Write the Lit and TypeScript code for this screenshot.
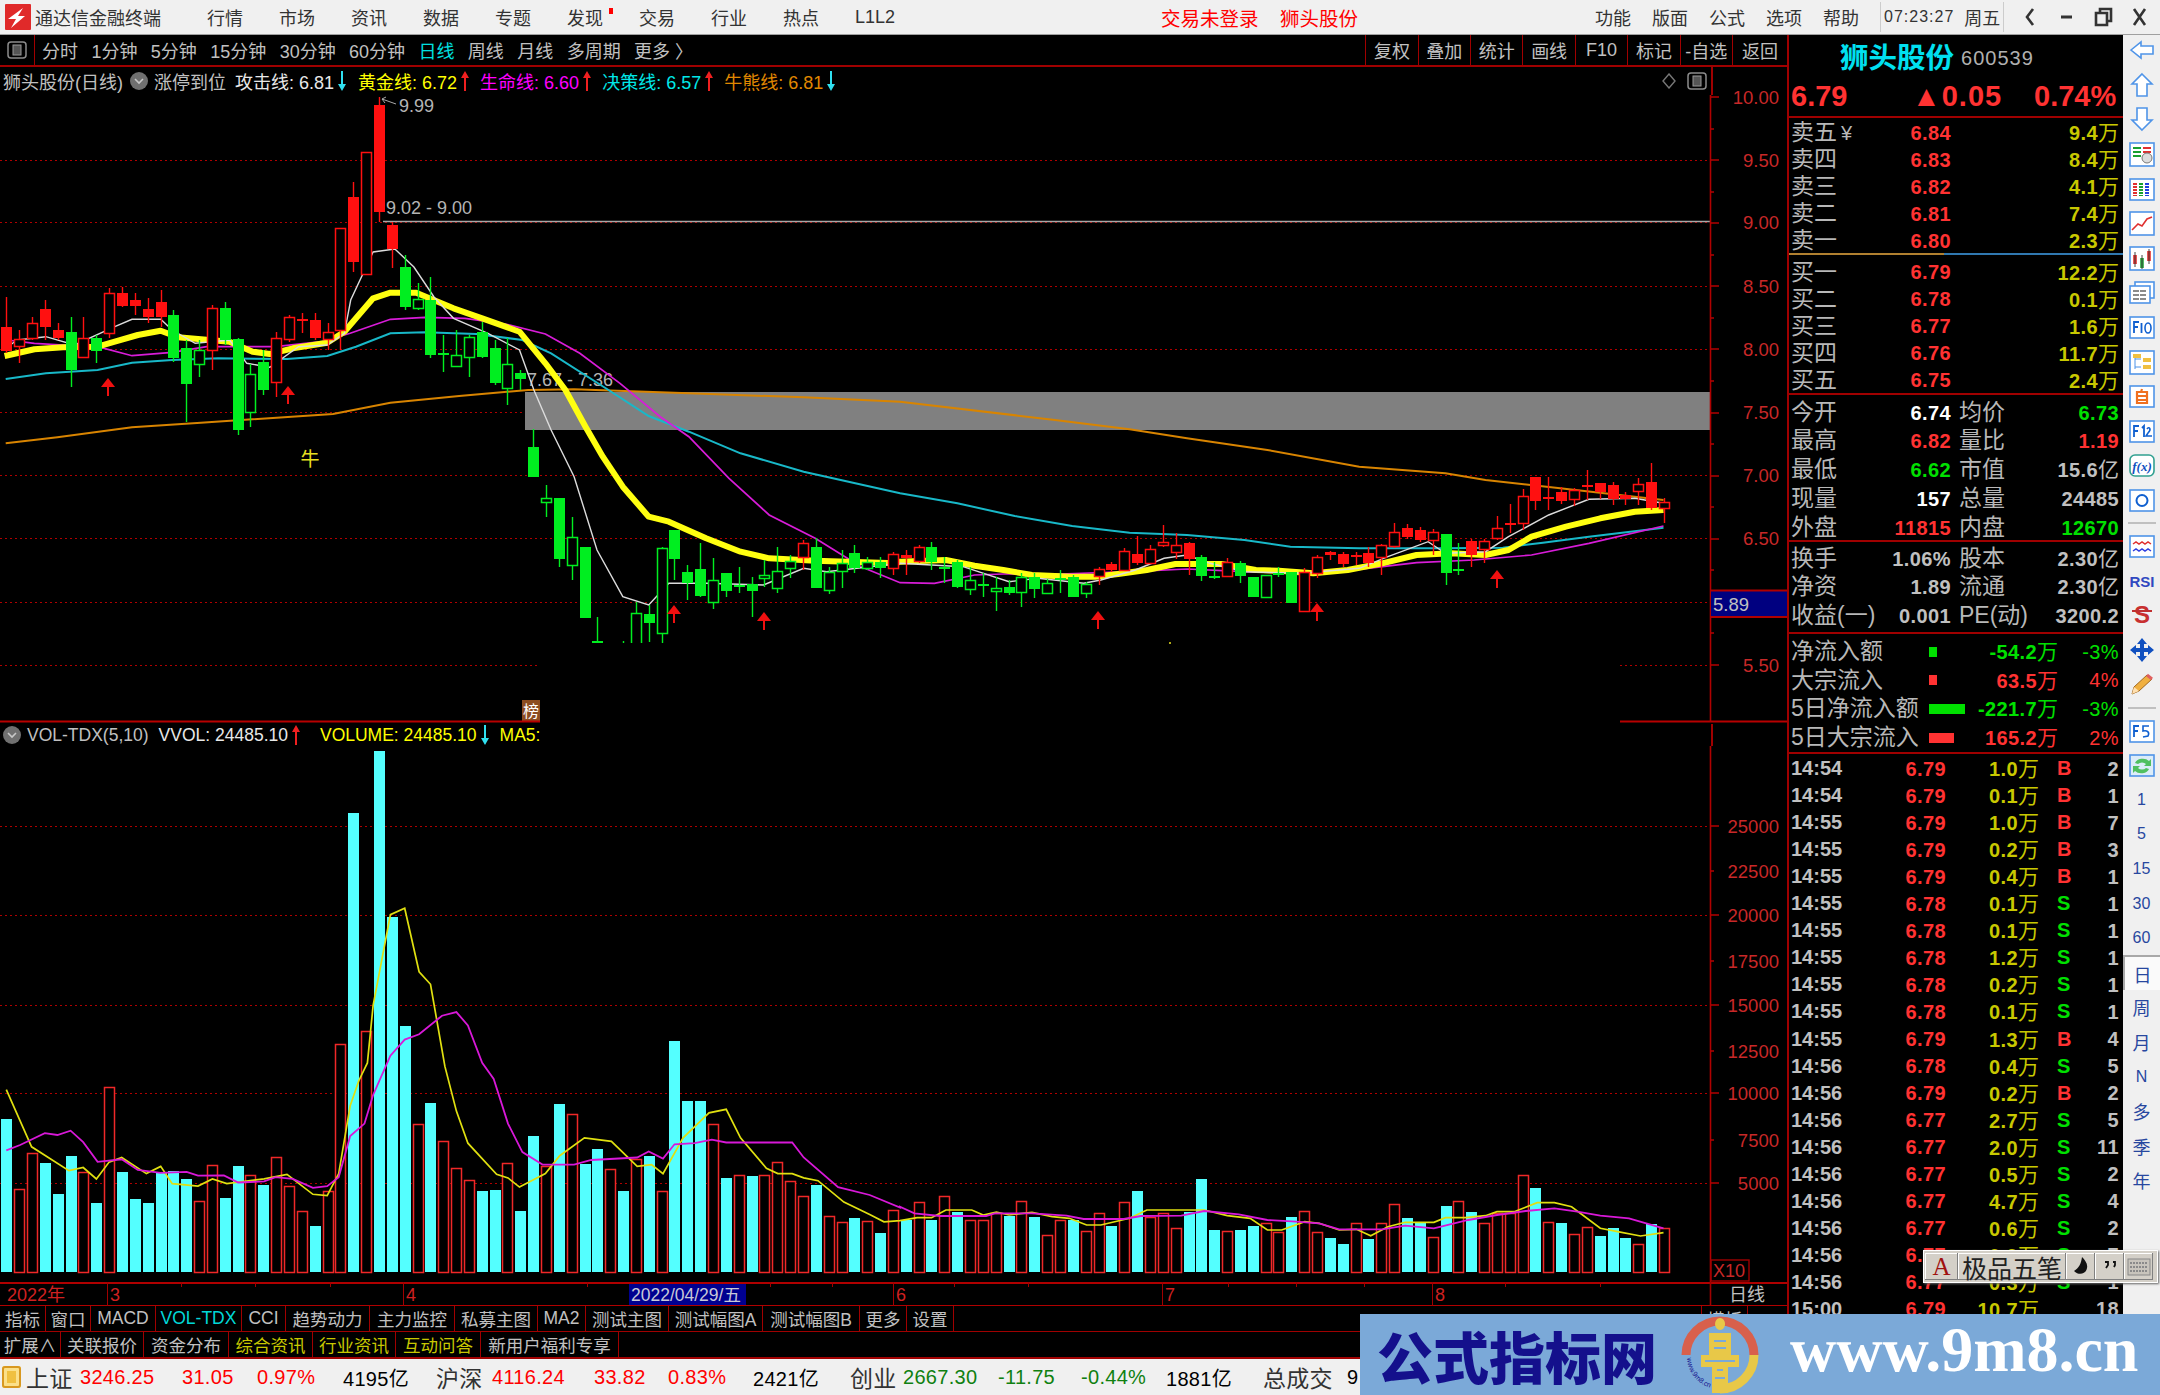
import { LitElement, html, css, svg } from "lit";
import { customElement } from "lit/decorators.js";

type C = [number, number, number, number, string];
const c6: C[] = [
[112,182,22,190,"R"],[148,168,120,218,"r"],[98,145,80,150,"r"],[58,112,30,150,"R"],[120,143,100,150,"R"],
[125,240,80,292,"G"],[145,200,80,205,"r"],[143,182,135,220,"G"],[8,130,-6,145,"r"],[8,48,-9,50,"R"],
[30,48,10,75,"R"],[58,80,25,100,"R"],[35,80,0,110,"R"],[76,205,60,215,"G"],[175,282,150,395,"G"],
[180,222,150,260,"g"],[55,180,45,240,"r"],[53,150,35,165,"G"],[148,420,145,435,"G"],[252,366,222,412,"g"],
[215,300,180,315,"G"],[145,275,125,322,"r"],[82,148,75,155,"r"],[88,92,70,130,"R"],[90,145,70,150,"R"],
[125,148,100,180,"r"],[-186,120,-186,180,"r"],[-279,-84,-324,-54,"R"],[-414,-48,-414,-48,"r"],[-555,-234,-579,-204,"R"],
[-195,-123,-204,-66,"R"],[-69,52,-105,60,"G"],[28,55,-21,60,"g"],[30,195,-39,205,"G"],[190,195,135,245,"G"],
[195,228,120,230,"g"],[140,200,135,260,"g"],[125,200,95,205,"G"],[175,278,150,285,"G"],[222,295,145,345,"g"],
[248,268,240,300,"G"],[472,560,418,562,"G"],[625,637,585,682,"g"],[625,808,625,830,"G"],[740,825,680,870,"g"],
[770,985,770,985,"G"],[1053,1070,980,1070,"G"],[1100,1110,1100,1110,"G"],[1062,1070,1052,1070,"G"],[968,1080,935,1080,"g"],
[972,998,945,1055,"G"],[775,1028,770,1070,"g"],[720,808,720,870,"G"],[847,880,825,930,"G"],[838,918,760,920,"G"],
[870,937,805,958,"g"],[850,903,850,920,"G"],[884,889,830,910,"G"],[882,902,860,980,"G"],[855,865,810,890,"g"],
[842,893,770,908,"g"],[812,835,795,865,"g"],[760,800,750,840,"r"],[770,893,745,895,"G"],[845,900,830,912,"g"],
[820,843,780,895,"g"],[788,835,765,850,"G"],[815,833,800,840,"g"],[815,835,800,865,"G"],[793,833,785,855,"r"],
];
const c7: C[] = [
[405,415,390,465,"R"],[380,422,375,430,"r"],[380,425,365,450,"G"],[440,444,410,490,"G"],[425,500,420,505,"G"],
[480,508,440,525,"g"],[493,498,460,530,"G"],[503,512,470,572,"g"],[500,518,480,525,"G"],[472,516,460,562,"g"],
[472,508,460,535,"G"],[488,520,478,522,"g"],[475,480,450,520,"G"],[470,531,465,532,"G"],[493,520,485,535,"g"],
[448,467,440,495,"r"],[433,450,425,455,"R"],[393,450,385,452,"r"],[402,428,348,435,"R"],[388,428,375,430,"r"],
[365,375,316,380,"r"],[376,395,338,418,"r"],[370,418,365,465,"R"],[410,468,405,482,"G"],[468,473,425,478,"G"],
[425,468,415,472,"r"],[428,468,422,490,"G"],[470,531,470,531,"G"],[465,531,465,531,"g"],[458,463,440,470,"G"],
[455,550,455,550,"G"],[457,572,445,572,"r"],[410,458,405,475,"r"],[397,404,392,420,"R"],[402,432,395,440,"R"],
[405,410,395,435,"R"],[398,430,380,440,"R"],[376,412,372,465,"r"],[335,378,308,385,"r"],[325,352,312,358,"R"],
[330,360,320,365,"R"],[336,360,328,405,"r"],[343,460,343,495,"G"],[447,453,370,465,"G"],[362,405,358,442,"R"],
[362,388,358,428,"r"],[325,355,288,360,"r"],[308,315,252,340,"R"],[227,308,208,330,"r"],[172,243,172,270,"R"],
[231,238,172,270,"R"],[217,243,200,252,"R"],[210,236,205,258,"r"],[195,199,150,240,"R"],[190,217,190,238,"R"],
[195,238,185,255,"R"],[225,237,215,255,"R"],[192,212,175,255,"r"],[185,265,130,270,"R"],[245,263,235,310,"r"],
];
const candles = [
  ...c6.map((c) => ({ t: 290 + c[0] / 3, b: 290 + c[1] / 3, wt: 290 + c[2] / 3, wb: 290 + c[3] / 3, k: c[4] })),
  ...c7.map((c) => ({ t: 420 + c[0] / 3, b: 420 + c[1] / 3, wt: 420 + c[2] / 3, wb: 420 + c[3] / 3, k: c[4] })),
];
const vol8: [string, number][] = [
["c",1118],["r",1312],["r",1212],["c",1240],["c",1328],["c",1220],["r",1265],["c",1353],["r",1027],["c",1265],
["c",1340],["c",1353],["c",1265],["c",1262],["c",1286],["r",1347],["r",1245],["c",1337],["c",1248],["r",1275],
["c",1303],["r",1224],["r",1304],["r",1376],["c",1416],["r",1320],["r",908],["c",260],["r",872],["c",88],
["c",552],["c",858],["r",1132],["c",1072],["r",1178],["r",1254],["r",1288],["c",1320],["c",1316],["r",1241],
["c",1375],["c",1165],["r",1250],["c",1076],["r",1102],["c",1244],["c",1202],["r",1258],["c",1320],["r",1228],
["c",1220],["r",1320],["c",900],["c",1068],["c",1068],["r",1132],["c",1282],["r",1275],["c",1278],["r",1275],
["r",1238],["r",1292],["r",1334],["c",1303],["r",1388],["r",1405],["c",1395],["r",1402],["c",1437],["r",1372],
];
const vol9: [string, number][] = [
["c",510],["r",457],["c",510],["r",438],["c",485],["r",510],["r",510],["r",490],["c",497],["r",452],
["c",500],["r",556],["r",510],["c",510],["r",543],["r",488],["c",527],["r",457],["c",424],["r",500],
["r",488],["r",533],["c",485],["c",388],["c",541],["r",542],["c",541],["c",527],["r",520],["r",547],
["c",500],["r",484],["r",547],["c",564],["c",581],["r",520],["c",568],["r",520],["r",461],["c",505],
["c",518],["r",560],["c",469],["r",452],["c",487],["r",520],["r",490],["r",490],["r",376],["c",415],
["r",515],["c",518],["r",551],["r",530],["c",559],["c",533],["c",564],["r",583],["c",523],["r",533],
];
const vols = [
  ...vol8.map((v) => ({ k: v[0], t: 720 + v[1] / 2.8 })),
  ...vol9.map((v) => ({ k: v[0], t: 1050 + v[1] / 3 })),
];
type P = [number, number];
const pts = (a: P[], ox: number, oy: number, sy: number) =>
  a.map((p) => `${(ox + p[0] / 1.742).toFixed(1)},${(oy + p[1] / sy).toFixed(1)}`).join(" ");
const line6 = (a: P[], b: P[]) => pts(a, 0, 290, 3) + " " + pts(b, 900, 420, 3);
const lineV = (a: P[], b: P[]) => pts(a, 0, 720, 2.8) + " " + pts(b, 900, 1050, 3);

const yellow = line6(
  [[8,198],[60,178],[110,172],[170,170],[200,155],[240,135],[280,122],[310,142],[350,148],[400,155],[440,185],[470,192],[510,175],[570,158],[600,125],[650,25],[680,8],[725,8],[790,55],[840,85],[905,125],[950,220],[985,300],[1020,410],[1050,500],[1085,590],[1130,680],[1165,695],[1230,745],[1290,785],[1340,805],[1420,812],[1560,820]],
  [[0,425],[80,420],[130,437],[180,450],[230,465],[300,470],[340,470],[380,462],[430,450],[480,432],[560,432],[620,450],[660,452],[720,460],[780,450],[840,430],[900,405],[960,400],[1020,405],[1060,390],[1100,350],[1160,320],[1220,295],[1280,275],[1330,270]]);
const magenta = line6(
  [[12,150],[60,160],[110,165],[170,170],[230,197],[300,187],[360,170],[480,170],[560,155],[610,130],[680,88],[740,82],[810,85],[880,102],[950,132],[1010,190],[1080,280],[1150,380],[1200,440],[1270,565],[1340,675],[1420,745],[1500,830],[1568,878]],
  [[60,490],[130,465],[180,462],[280,462],[400,455],[500,447],[600,455],[700,460],[800,448],[900,428],[1000,420],[1100,405],[1200,370],[1330,318]]);
const cyan = line6(
  [[10,267],[80,250],[170,240],[230,218],[300,210],[380,205],[500,207],[570,198],[620,170],[680,130],[740,127],[830,132],[910,150],[960,190],[1060,300],[1130,378],[1200,425],[1290,490],[1400,545],[1568,610]],
  [[100,250],[200,288],[300,318],[400,338],[500,345],[600,360],[680,380],[800,385],[950,385],[1050,383],[1120,368],[1200,350],[1330,323]]);
const orange = line6(
  [[10,460],[100,442],[230,412],[350,398],[580,372],[680,338],[800,318],[920,300],[1000,298],[1200,310],[1400,322],[1568,335]],
  [[270,0],[400,28],[500,55],[640,90],[800,140],[950,160],[1020,180],[1150,205],[1330,240]]);
const white = line6(
  [[10,175],[30,150],[80,140],[130,165],[200,110],[230,88],[280,88],[300,120],[340,160],[400,150],[430,220],[470,232],[520,170],[570,165],[600,130],[611,30],[650,-114],[688,-123],[721,-69],[756,21],[790,85],[850,130],[905,180],[930,300],[960,420],[1000,560],[1040,780],[1085,920],[1130,945],[1165,880],[1230,880],[1330,885],[1400,835],[1440,845],[1568,820]],
  [[110,440],[190,485],[240,475],[320,490],[350,480],[410,450],[460,415],[500,405],[540,430],[600,455],[700,460],[800,445],[850,410],[920,365],[950,400],[1020,395],[1060,350],[1130,285],[1200,238],[1280,235],[1330,250]]);
const vYellow = lineV(
  [[11,1035],[55,1195],[120,1262],[145,1253],[168,1285],[190,1238],[212,1225],[255,1270],[280,1250],[300,1298],[345,1305],[370,1285],[395,1298],[460,1285],[500,1272],[545,1328],[570,1332],[590,1270],[610,1080],[625,1010],[640,960],[650,800],[680,545],[705,527],[730,705],[750,740],[775,970],[795,1095],[815,1185],[865,1272],[885,1282],[905,1308],[950,1270],[975,1220],[1018,1170],[1065,1180],[1110,1250],[1135,1245],[1155,1270],[1190,1170],[1235,1100],[1265,1090],[1290,1170],[1335,1255],[1355,1270],[1380,1270],[1400,1282],[1425,1290],[1470,1350],[1515,1385],[1540,1405],[1568,1402]],
  [[0,512],[30,503],[55,503],[80,480],[125,480],[145,495],[168,486],[190,495],[230,487],[265,500],[295,505],[325,525],[350,525],[400,505],[430,480],[490,480],[530,480],[570,497],[610,505],[640,540],[665,540],[705,515],[730,520],[765,540],[795,538],[820,557],[850,530],[880,517],[930,517],[950,503],[985,503],[1020,497],[1040,485],[1070,485],[1110,458],[1140,458],[1170,470],[1220,535],[1250,545],[1290,558],[1330,548]]);
const vMag = lineV(
  [[11,1205],[35,1190],[78,1157],[100,1162],[123,1150],[145,1182],[170,1237],[212,1230],[240,1260],[280,1268],[325,1265],[345,1276],[390,1275],[415,1295],[460,1292],[480,1280],[510,1285],[545,1310],[570,1305],[590,1280],[610,1165],[635,1130],[650,1050],[680,940],[705,895],[730,880],[770,828],[795,818],[815,855],[840,960],[860,1005],[885,1130],[910,1210],[945,1245],[1000,1245],[1030,1232],[1110,1225],[1130,1208],[1155,1228],[1175,1188],[1210,1185],[1240,1175],[1265,1183],[1380,1183],[1400,1225],[1460,1308],[1515,1330],[1568,1365]],
  [[0,470],[25,490],[70,498],[150,498],[165,490],[230,490],[290,497],[320,507],[390,507],[420,498],[490,497],[530,483],[590,493],[640,510],[690,515],[730,520],[765,538],[840,538],[880,527],[930,535],[990,510],[1040,495],[1090,483],[1140,475],[1180,485],[1220,497],[1270,505],[1330,535]]);

const arrows: P[] = [[108,378],[288,386],[674,605],[764,612],[1098,611],[1317,603],[1497,570]];

const bx = (i: number) => 6.3 + 12.85 * i;

const book = [
  ["卖五", "6.84", "9.4万", "¥"], ["卖四", "6.83", "8.4万"], ["卖三", "6.82", "4.1万"], ["卖二", "6.81", "7.4万"], ["卖一", "6.80", "2.3万"],
];
const book2 = [["买一", "6.79", "12.2万"], ["买二", "6.78", "0.1万"], ["买三", "6.77", "1.6万"], ["买四", "6.76", "11.7万"], ["买五", "6.75", "2.4万"]];
const stats = [
  ["今开", "6.74", "w", "均价", "6.73", "g"], ["最高", "6.82", "r", "量比", "1.19", "r"], ["最低", "6.62", "g", "市值", "15.6亿", "s"],
  ["现量", "157", "w", "总量", "24485", "s"], ["外盘", "11815", "r", "内盘", "12670", "g"],
];
const stats2 = [
  ["换手", "1.06%", "s", "股本", "2.30亿", "s"], ["净资", "1.89", "s", "流通", "2.30亿", "s"], ["收益(一)", "0.001", "s", "PE(动)", "3200.2", "s"],
];
const flows = [
  ["净流入额", 8, "g", "-54.2万", "-3%"], ["大宗流入", 8, "r", "63.5万", "4%"],
  ["5日净流入额", 36, "g", "-221.7万", "-3%"], ["5日大宗流入", 25, "r", "165.2万", "2%"],
];
const ticks = [
  ["14:54","6.79","1.0万","B","2"],["14:54","6.79","0.1万","B","1"],["14:55","6.79","1.0万","B","7"],["14:55","6.79","0.2万","B","3"],
  ["14:55","6.79","0.4万","B","1"],["14:55","6.78","0.1万","S","1"],["14:55","6.78","0.1万","S","1"],["14:55","6.78","1.2万","S","1"],
  ["14:55","6.78","0.2万","S","1"],["14:55","6.78","0.1万","S","1"],["14:55","6.79","1.3万","B","4"],["14:56","6.78","0.4万","S","5"],
  ["14:56","6.79","0.2万","B","2"],["14:56","6.77","2.7万","S","5"],["14:56","6.77","2.0万","S","11"],["14:56","6.77","0.5万","S","2"],
  ["14:56","6.77","4.7万","S","4"],["14:56","6.77","0.6万","S","2"],["14:56","6.77","0.9万","S","7"],["14:56","6.77","0.3万","S","1"],
  ["15:00","6.79","10.7万","","18"],
];
const tabs1: [string, number, string?][] = [
  ["指标",46],["窗口",45],["MACD",65],["VOL-TDX",86,"c"],["CCI",44],["趋势动力",84],["主力监控",85],["私募主图",83],["MA2",48],["测试主图",83],["测试幅图A",94],["测试幅图B",97],["更多",47],["设置",47],
];
const tabs2: [string, number, string?][] = [
  ["扩展∧",61],["关联报价",83],["资金分布",85],["综合资讯",84,"y"],["行业资讯",83,"y"],["互动问答",85,"y"],["新用户福利专享",138],
];
const menus = ["行情","市场","资讯","数据","专题","发现","交易","行业","热点","L1L2"];
const periods = ["分时","1分钟","5分钟","15分钟","30分钟","60分钟","日线","周线","月线","多周期","更多 〉"];
const tools = ["复权","叠加","统计","画线","F10","标记","-自选","返回"];
const status: [string, number, string][] = [
  ["上证",54,"k"],["3246.25",102,"r"],["31.05",75,"r"],["0.97%",86,"r"],["4195亿",93,"b"],["沪深",56,"k"],["4116.24",102,"r"],["33.82",74,"r"],["0.83%",85,"r"],["2421亿",97,"b"],
  ["创业",53,"k"],["2667.30",95,"g"],["-11.75",83,"g"],["-0.44%",85,"g"],["1881亿",97,"b"],["总成交",84,"k"],["9",20,"b"],
];
const sideText = ["1","5","15","30","60","日","周","月","N","多","季","年"];

const sideIcons = [
  svg`<path d="M3 14 L13 6 V10 H25 V18 H13 V22 Z" fill="#fff" stroke="#4f94e8" stroke-width="1.6"/>`,
  svg`<path d="M14 3 L24 13 H19 V25 H9 V13 H4 Z" fill="#fff" stroke="#4f94e8" stroke-width="1.6"/>`,
  svg`<path d="M14 25 L24 15 H19 V3 H9 V15 H4 Z" fill="#fff" stroke="#4f94e8" stroke-width="1.6"/>`,
  svg`<rect x="2" y="3" width="24" height="23" fill="#fff" stroke="#4f94e8" stroke-width="1.6"/><path d="M5 8h8M5 12h8M5 16h8" stroke="#18a030" stroke-width="2"/><path d="M15 8h8M15 12h8" stroke="#e03030" stroke-width="2"/><circle cx="19" cy="18" r="5" fill="#ddd" stroke="#777"/>`,
  svg`<rect x="2" y="4" width="24" height="21" fill="#fff" stroke="#4f94e8" stroke-width="1.6"/><path d="M7 8v13" stroke="#e03030" stroke-width="4" stroke-dasharray="2 1"/><path d="M13 8v13" stroke="#18a030" stroke-width="4" stroke-dasharray="2 1"/><path d="M19 8v13" stroke="#2040e0" stroke-width="4" stroke-dasharray="2 1"/>`,
  svg`<rect x="2" y="3" width="24" height="23" fill="#fff" stroke="#4f94e8" stroke-width="1.6"/><path d="M4 21 L10 15 L14 17 L19 10 L24 8" fill="none" stroke="#e03030" stroke-width="1.6"/>`,
  svg`<rect x="2" y="3" width="24" height="23" fill="#fff" stroke="#4f94e8" stroke-width="1.6"/><path d="M7 11v9" stroke="#e02020" stroke-width="3.5"/><path d="M14 14v10" stroke="#18a030" stroke-width="3.5"/><path d="M21 7v10" stroke="#e02020" stroke-width="3.5"/><path d="M7 8v15M14 11v14M21 5v15" stroke="#444"/>`,
  svg`<rect x="7" y="4" width="19" height="16" fill="#fff" stroke="#4f94e8" stroke-width="1.6"/><rect x="2" y="8" width="20" height="17" fill="#fff" stroke="#4f94e8" stroke-width="1.6"/><path d="M5 13h14M5 17h14M5 21h14" stroke="#666" stroke-width="1.6" stroke-dasharray="6 1"/>`,
  svg`<rect x="2" y="4" width="24" height="21" fill="#fff" stroke="#4f94e8" stroke-width="1.6"/><path d="M6 20V9h5M6 14h4M13.5 10v10" fill="none" stroke="#1060d0" stroke-width="1.8"/><ellipse cx="20" cy="15" rx="3" ry="5" fill="none" stroke="#1060d0" stroke-width="1.6"/>`,
  svg`<rect x="2" y="3" width="24" height="23" fill="#fff" stroke="#4f94e8" stroke-width="1.6"/><path d="M7 7v14M7 11h6M7 19h6" fill="none" stroke="#4f94e8"/><rect x="5" y="6" width="8" height="4" fill="#f0c040"/><rect x="15" y="10" width="8" height="4" fill="#f0c040"/><rect x="15" y="17" width="8" height="4" fill="#f0c040"/>`,
  svg`<rect x="2" y="4" width="24" height="21" fill="#fff" stroke="#4f94e8" stroke-width="1.6"/><path d="M9 10h10v11H9zM9 14h10M9 18h10M13 10l1-3" fill="none" stroke="#f07020" stroke-width="2.2"/>`,
  svg`<rect x="2" y="4" width="24" height="21" fill="#fff" stroke="#4f94e8" stroke-width="1.6"/><path d="M6 20V9h5M6 14h4M14 11l2-2v11" fill="none" stroke="#1060d0" stroke-width="1.8"/><path d="M19 12c2-3 5 0 1 4l-2 3h6" fill="none" stroke="#1060d0" stroke-width="1.6"/>`,
  svg`<rect x="2" y="4" width="24" height="21" rx="5" fill="#fff" stroke="#30a090" stroke-width="1.6"/><text x="14" y="20" class="fx">f(x)</text>`,
  svg`<rect x="2" y="4" width="24" height="21" fill="#fff" stroke="#4f94e8" stroke-width="1.6"/><circle cx="14" cy="14.5" r="5.5" fill="none" stroke="#1060d0" stroke-width="2"/>`,
];
const sideIcons2 = [
  svg`<rect x="2" y="4" width="24" height="21" fill="#fff" stroke="#4f94e8" stroke-width="1.6"/><path d="M5 12l3-2 3 2 3-2 3 2 3-2 3 2" fill="none" stroke="#e03030" stroke-width="1.5"/><path d="M5 19l3-2 3 2 3-2 3 2 3-2 3 2" fill="none" stroke="#3040e0" stroke-width="1.5"/>`,
  svg`<text x="14" y="20" class="rsi">RSI</text>`,
  svg`<text x="14" y="22" class="dollar">S</text><path d="M4 10h20" stroke="#c03030" stroke-width="2"/>`,
  svg`<path d="M14 2l5 6h-3v4h4V9l6 5-6 5v-3h-4v4h3l-5 6-5-6h3v-4H8v3l-6-5 6-5v3h4V8H9z" fill="#1050c0"/>`,
  svg`<path d="M4 24l2-7L19 5l5 4L11 21z" fill="#f0b040" stroke="#a06820"/><path d="M4 24l2-7 5 4z" fill="#ffe0b0"/><path d="M19 5l5 4" stroke="#e06060" stroke-width="3"/>`,
];
const sideIcons3 = [
  svg`<rect x="2" y="4" width="24" height="21" fill="#fff" stroke="#4f94e8" stroke-width="1.6"/><path d="M6 20V9h5M6 14h4" fill="none" stroke="#1060d0" stroke-width="1.8"/><path d="M21 9h-6v5c4-1 7 1 5 5l-5 1" fill="none" stroke="#1060d0" stroke-width="1.6"/>`,
  svg`<rect x="2" y="4" width="24" height="21" fill="#dcecf8" stroke="#4f94e8" stroke-width="1.6"/><path d="M7 12a8 6 0 0 1 14-2l2-2v7h-7l2-2a5 4 0 0 0-8 0zM21 18a8 6 0 0 1-14 2l-2 2v-7h7l-2 2a5 4 0 0 0 8 0z" fill="#50c060"/>`,
];

@customElement("app-root")
export class AppRoot extends LitElement {
  static styles = css`
    :host { display: block; width: 2160px; height: 1395px; position: relative; overflow: hidden; background: #000;
      font-family: "Liberation Sans", "Noto Sans CJK SC", sans-serif; font-size: 18px; color: #c0c0c0; }
    .top { height: 34px; border-bottom: 1px solid #a0a0a0; background: #f0f0f0; display: flex; align-items: center; color: #333; box-sizing: content-box; }
    .logo { width: 26px; height: 26px; margin-left: 5px; flex: none; }
    .title { margin-left: 4px; width: 172px; flex: none; }
    .menu { width: 36px; margin-right: 36px; flex: none; position: relative; white-space: nowrap; }
    .dot { position: absolute; left: 10px; top: 4px; width: 4px; height: 6px; background: #f00; margin-left: 32px; }
    .trade { color: #f00; margin-left: 234px; width: 119px; flex: none; font-size: 19.5px; }
    .stk { color: #f00; width: 315px; flex: none; font-size: 19.5px; }
    .rmenu { width: 36px; margin-right: 21px; flex: none; }
    .clock { border-left: 1px solid #ccc; border-right: 1px solid #ccc; height: 30px; width: 124px; flex: none; display: flex; align-items: center; gap: 10px; padding-left: 3px; box-sizing: border-box; font-size: 16px; letter-spacing: 1px; }
    .clock b { font-weight: 400; font-size: 18px; letter-spacing: 0; }
    .win { width: 156px; height: 30px; flex: none; }
    .main { display: flex; height: 1324px; }
    .left { width: 1787px; flex: none; display: flex; flex-direction: column; }
    .bar { height: 32px; box-sizing: border-box; border-bottom: 2px solid #a00000; display: flex; align-items: center; }
    .tg { width: 35px; height: 30px; flex: none; border-right: 1px solid #a00000; box-sizing: border-box; display: flex; align-items: center; justify-content: center; margin-right: 7px; }
    .per { margin-right: 13.4px; white-space: nowrap; }
    .per.on { color: #00e0e0; }
    .tools { margin-left: auto; display: flex; height: 100%; }
    .tool { width: 52.4px; box-sizing: border-box; border-left: 1px solid #a00000; display: flex; align-items: center; justify-content: center; }
    .tool:last-child { width: 55px; }
    .info { height: 28px; display: flex; align-items: center; white-space: nowrap; padding-left: 3px; }
    .info > span { flex: none; }
    .knob { width: 18px; height: 18px; border-radius: 50%; background: #707070; margin: 0 6px 0 7px; flex: none; display: inline-flex; align-items: center; justify-content: center; }
    .ind { margin-left: 11px; display: inline-flex; align-items: center; gap: 2px; }
    .ind svg { flex: none; margin-left: 2px; }
    .info > .spacer, .spacer { flex: 1; }
    .acts { width: 76px; align-self: stretch; border-left: 2px solid #a00000; flex: none; box-sizing: border-box; }
    .info > .mini { display: flex; align-items: center; gap: 11px; margin-right: 4px; }
    svg.chart { display: block; flex: none; overflow: visible; }
    .vhead { height: 24px; display: flex; align-items: center; white-space: nowrap; font-size: 17.5px; padding-top: 2px; box-sizing: border-box; }
    .vtext { width: 540px; overflow: hidden; display: flex; align-items: center; flex: none; padding-left: 2px; box-sizing: border-box; }
    .vtext .knob { margin: 0 6px 0 1px; }
    .vtext span { flex: none; }
    .tabs { display: flex; box-sizing: border-box; border-bottom: 1px solid #a00000; white-space: nowrap; }
    .tabs.one { height: 26px; } .tabs.two { height: 27px; border-bottom-width: 2px; }
    .tab { border-right: 1px solid #a00000; box-sizing: border-box; display: flex; align-items: center; justify-content: center; flex: none; font-size: 17.5px; height: 100%; }
    .tab.c { color: #00d8d8; } .tab.y { color: #c8c800; }
    .tabr { margin-left: auto; display: flex; height: 100%; margin-right: 39px; }
    .tabr .tab { border-left: 1px solid #a00000; width: 47px; }
    .panel { width: 336px; flex: none; border-left: 2px solid #a00000; box-sizing: border-box; padding: 0 4px 0 2px; overflow: hidden; }
    .head { height: 41px; display: flex; align-items: center; padding-left: 49px; gap: 7px; }
    .head b { color: #00e0f0; font-size: 28.5px; font-weight: 700; white-space: nowrap; }
    .head span { font-size: 20px; margin-top: 6px; color: #b0b0b0; letter-spacing: 1px; }
    .quote { margin: 0 -4px 0 -2px; padding: 0 4px 0 2px; height: 42px; border-bottom: 2px solid #a00000; box-sizing: border-box; display: grid; grid-template-columns: 121px 122px 1fr; align-items: center; font-weight: 700; font-size: 29px; color: #ff3232; white-space: nowrap; }
    .quote span:nth-child(2) { letter-spacing: 1px; }
    .sec { margin: 0 -4px 0 -2px; padding: 0 4px 0 2px; border-bottom: 2px solid #a00000; }
    .plain { border: 0; }
    .mid { border-bottom: 0; height: 2px; padding: 0; display: flex; }
    .mid i { display: block; height: 2px; background: #b08030; width: 155px; } .mid u { display: block; flex: 1; background: #3078b0; }
    .row { display: grid; align-items: center; white-space: nowrap; padding-top: 2px; box-sizing: border-box; }
    .book { grid-template-columns: 100px 60px 1fr; height: 27.1px; }
    .stat { grid-template-columns: 100px 60px 70px 1fr; height: 28.7px; }
    .stat3 { height: 28.3px; }
    .flow { grid-template-columns: 138px 40px 89px 1fr; height: 28.7px; }
    .tick { grid-template-columns: 52px 103px 93px 32px 1fr; height: 27.05px; }
    .l { font-size: 23px; color: #b8b8b8; line-height: 1; display: flex; align-items: center; }
    .yen { font-size: 20px; margin-left: 4px; }
    .n { font-weight: 700; font-size: 20px; text-align: right; letter-spacing: .4px; line-height: 1; }
    .n .u { font-weight: 400; font-size: 21px; letter-spacing: 0; }
    .pct { font-weight: 400; }
    .time { font-weight: 700; font-size: 20px; color: #c0c0c0; }
    .l2 { padding-left: 8px; }
    .r { color: #ff3232; } .g { color: #00e000; } .w { color: #fff; } .s { color: #c0c0c0; } .y { color: #c8c800; }
    .fbar { height: 10px; display: block; }
    .fbar.r { background: #ff3232; } .fbar.g { background: #00e000; }
    .bs { font-size: 20px; padding-left: 18px; font-weight: 700; }
    .pad1 { padding-top: 2px; } .pad3 { padding-top: 1px; padding-bottom: 4px; } .pad4 { padding-top: 2px; padding-bottom: 1px; }
    .side { width: 37px; flex: none; background: #f0f0f0; display: flex; flex-direction: column; align-items: center; }
    .si { height: 34.6px; width: 37px; display: flex; align-items: center; justify-content: center; flex: none; color: #27479f; font-size: 16px; }
    .si.cj { font-size: 18px; }
    .si.on { background: #fafafa; border-top: 2px solid #a8a8a8; border-left: 2px solid #a8a8a8; box-sizing: border-box; }
    .si svg { display: block; }
    .fx { font: italic 700 13px "Liberation Serif", serif; fill: #1050c0; text-anchor: middle; }
    .rsi { font: 700 15px "Liberation Sans", sans-serif; fill: #3048c0; text-anchor: middle; }
    .dollar { font: 700 24px "Liberation Sans", sans-serif; fill: #c83030; text-anchor: middle; }
    .sep { height: 11.5px; width: 28px; flex: none; display: flex; align-items: center; }
    .sep::before { content: ""; height: 2px; width: 100%; background: #c0c0c0; }
    .side .lead { margin-top: -2px; }
    .stat-bar { height: 36px; background: #f0f0f0; display: flex; align-items: center; white-space: nowrap; color: #333; }
    .st { flex: none; font-size: 20px; letter-spacing: .3px; }
    .st.k { font-size: 23px; color: #333; } .st.r { color: #f00; } .st.g { color: #108010; } .st.b { color: #000; }
    .coin { width: 19px; height: 22px; margin: 0 5px 0 2px; flex: none; border-radius: 3px; background: #f0c040; box-shadow: inset 0 0 0 2px #d89820, inset 0 0 0 5px #fbe08a; }
    .wm { position: absolute; right: 0; bottom: 0; width: 800px; height: 81px; background: #7ba9d8; display: flex; align-items: center; }
    .wm .cn { margin-left: 17px; font: 900 56px/1 "Noto Sans CJK SC", sans-serif; color: #14108c; white-space: nowrap; flex: none; width: 288px; }
    .wm svg { flex: none; margin-left: 16px; }
    .wm .en { margin-left: 31px; font: 700 64px/1 "Liberation Serif", serif; color: #fff; white-space: nowrap; flex: none; margin-top: -10px; }
    .ime { position: absolute; left: 1923px; top: 1250px; width: 235px; height: 33px; background: #d4d0c8; border: 1px solid #fff; box-shadow: 1px 1px 2px #666; display: flex; box-sizing: border-box; padding: 2px 1px; gap: 0; color: #222; font-size: 25px; }
    .ime span { display: flex; align-items: center; justify-content: center; box-shadow: inset -1px -1px 0 #808080, inset 1px 1px 0 #fff; flex: none; height: 100%; }
    .ime .a { width: 33px; color: #a01010; font-weight: 400; font-family: "Liberation Serif", serif; }
    .ime .nm { width: 108px; white-space: nowrap; }
    .ime .b { width: 29px; font-size: 18px; }
    text { font-family: "Liberation Sans", "Noto Sans CJK SC", sans-serif; }
    .ax { fill: #c82828; font-size: 18.5px; text-anchor: end; }
    .lab { fill: #b4b4b4; font-size: 18px; }
    .dt { fill: #d02020; font-size: 18px; }
  `;

  private val(v: string, cls = "") {
    const m = v.match(/^(.*?)([万亿]?)$/)!;
    return html`<span class="n ${cls}">${m[1]}<span class="u">${m[2]}</span></span>`;
  }

  private candle(i: number) {
    const c = candles[i];
    const x = Math.round(bx(i));
    const red = c.k === "R" || c.k === "r";
    const col = red ? "#ff1010" : "#00ee20";
    const t = Math.round(c.t), b = Math.round(c.b);
    const wick = svg`<path d="M${x + 0.5} ${c.wt.toFixed(0)}V${c.wb.toFixed(0)}" stroke=${col} stroke-width="1.4"/>`;
    if (c.k === "R" || c.k === "G") {
      return svg`${wick}<rect x=${x - 5} y=${t} width="11" height=${Math.max(2, b - t)} fill=${col}/>`;
    }
    return svg`${wick}<rect x=${x - 4.5} y=${t + 0.5} width="10" height=${Math.max(2, b - t)} fill="#000" stroke=${col} stroke-width="1.5"/>`;
  }

  private priceChart() {
    const grid = [160, 222, 286, 349, 412, 475, 538, 602];
    const labels: [string, number][] = [["10.00",97],["9.50",160],["9.00",222],["8.50",286],["8.00",349],["7.50",412],["7.00",475],["6.50",538],["5.50",665]];
    const minor = Array.from({ length: 19 }, (_, k) => 97 + k * 31.55);
    return html`<svg class="chart" width="1787" height="627" viewBox="0 95 1787 627">
      <defs><clipPath id="pclip"><rect x="0" y="95" width="1710" height="548"/></clipPath></defs>
      ${grid.map((y) => svg`<path d="M0 ${y + 0.5}H1710" stroke="#b00000" stroke-dasharray="2 3"/>`)}
      <path d="M0 665.5H540M1620 665.5H1710" stroke="#b00000" stroke-dasharray="2 3"/>
      <rect x="525" y="392" width="1185" height="38" fill="#808080"/>
      <path d="M383 221.5H1710" stroke="#a8a8a8" stroke-width="1.6"/>
      <text x="527" y="386" class="lab">7.67 - 7.36</text>
      <g clip-path="url(#pclip)">
        <polyline points=${orange} fill="none" stroke="#d88400" stroke-width="2"/>
        <polyline points=${cyan} fill="none" stroke="#18b8c8" stroke-width="2"/>
        <polyline points=${magenta} fill="none" stroke="#d81cd8" stroke-width="1.7"/>
        <polyline points=${yellow} fill="none" stroke="#ffff10" stroke-width="6" stroke-linejoin="round"/>
        <polyline points=${white} fill="none" stroke="#dcdcdc" stroke-width="1.4"/>
        ${candles.map((_, i) => this.candle(i))}
      </g>
      ${arrows.map((a) => svg`<path d="M${a[0]} ${a[1] + 6}v12" stroke="#f01010" stroke-width="2"/><path d="M${a[0]} ${a[1]}l7 9h-14z" fill="#f01010"/>`)}
      <text x="310" y="466" font-size="19" fill="#e8e020" text-anchor="middle">牛</text>
      <path d="M382 99l14 5M382 99l4 -2M382 99l3 4" stroke="#a8a8a8" fill="none"/>
      <text x="399" y="112" class="lab">9.99</text>
      <text x="386" y="214" class="lab">9.02 - 9.00</text>
      <rect x="522" y="700" width="18" height="21" fill="#8c4c20"/>
      <text x="531" y="717" font-size="16" fill="#fff" text-anchor="middle">榜</text>
      <circle cx="1170" cy="643" r="1" fill="#e8e020"/>
      <path d="M0 721.5H540M1620 721.5H1787" stroke="#b80000" stroke-width="2"/>
      <path d="M1710.5 95V722" stroke="#b00000" stroke-width="1.6"/>
      ${minor.map((y, k) => svg`<path d="M1711 ${y.toFixed(0)}h${k % 2 ? 3 : 8}" stroke="#c00000" stroke-width="1.4"/>`)}
      ${labels.map((l) => svg`<text x="1779" y=${l[1] + 7} class="ax">${l[0]}</text>`)}
      <rect x="1711" y="591" width="76" height="26" fill="#000080"/>
      <path d="M1711 590.5H1787M1711 617H1787" stroke="#b00000" stroke-width="2"/>
      <text x="1713" y="611" fill="#c0c0c0" font-size="18.5">5.89</text>
    </svg>`;
  }

  private volChart() {
    const dots = [826, 915, 1005, 1093, 1183];
    const labels: [string, number][] = [["25000",826],["22500",871],["20000",915],["17500",961],["15000",1005],["12500",1051],["10000",1093],["7500",1140],["5000",1183]];
    return html`<svg class="chart" width="1787" height="536" viewBox="0 746 1787 536">
      ${dots.map((y) => svg`<path d="M0 ${y + 0.5}H1710" stroke="#b00000" stroke-dasharray="2 3"/>`)}
      ${vols.map((v, i) => {
        const x = Math.round(bx(i));
        const t = Math.round(v.t);
        return v.k === "c"
          ? svg`<rect x=${x - 5} y=${t} width="11" height=${1272 - t} fill="#54ffff"/>`
          : svg`<rect x=${x - 4.5} y=${t + 0.5} width="10" height=${1272 - t} fill="#000" stroke="#f02828" stroke-width="1.5"/>`;
      })}
      <polyline points=${vYellow} fill="none" stroke="#e0e010" stroke-width="1.7"/>
      <polyline points=${vMag} fill="none" stroke="#d818d8" stroke-width="1.8"/>
      <path d="M1710.5 746V1282" stroke="#b00000" stroke-width="1.6"/>
      ${labels.map((l, k) => svg`<path d="M1711 ${l[1]}h${k % 2 ? 3 : 8}" stroke="#c00000" stroke-width="1.4"/>
        <text x="1779" y=${l[1] + 7} class="ax">${l[0]}</text>`)}
      <rect x="1711" y="1260" width="38" height="21" fill="none" stroke="#a00000" stroke-width="1.4"/>
      <text x="1713" y="1277" font-size="18" fill="#c82828">X10</text>
    </svg>`;
  }

  private dateAxis() {
    const div: [number, string][] = [[107,"3"],[403,"4"],[893,"6"],[1162,"7"],[1432,"8"]];
    const tick = [181,255,330,587,770,832,954,1028,1228,1296,1364,1505,1600];
    return html`<svg class="chart" width="1787" height="24" viewBox="0 0 1787 24">
      <path d="M0 1H1787" stroke="#b00000" stroke-width="2"/>
      <path d="M0 23.5H1787" stroke="#b00000"/>
      ${div.map((d) => svg`<path d="M${d[0] + 0.5} 0V24" stroke="#a00000"/><text x=${d[0] + 3} y="19" class="dt">${d[1]}</text>`)}
      ${tick.map((x) => svg`<path d="M${x + 0.5} 0v5" stroke="#a00000"/>`)}
      <text x="7" y="19" class="dt">2022年</text>
      <rect x="629" y="2" width="117" height="21" fill="#000090"/>
      <text x="631" y="19" font-size="17.5" fill="#c8c8d8">2022/04/29/五</text>
      <path d="M1710.5 0V24" stroke="#a00000" stroke-width="1.6"/>
      <text x="1729" y="19" font-size="18" fill="#c0c0c0">日线</text>
    </svg>`;
  }

  private upA(c: string) {
    return html`<svg width="8" height="20" viewBox="0 0 8 20"><path d="M4 0l4 7H5v13H3V7H0z" fill=${c}/></svg>`;
  }
  private dnA(c: string) {
    return html`<svg width="8" height="20" viewBox="0 0 8 20"><path d="M4 20l4-7H5V0H3v13H0z" fill=${c}/></svg>`;
  }

  private knob() {
    return html`<i class="knob"><svg width="10" height="8" viewBox="0 0 10 8"><path d="M1 2l4 4 4-4" fill="none" stroke="#c8c8c8" stroke-width="1.6"/></svg></i>`;
  }

  private toggle() {
    return html`<svg width="20" height="18" viewBox="0 0 20 18"><rect x="1" y="1" width="18" height="16" rx="3" fill="none" stroke="#8c8c8c" stroke-width="1.5"/><rect x="6" y="4" width="8" height="10" fill="#555" stroke="#999"/></svg>`;
  }

  render() {
    return html`
      <div class="top">
        <svg class="logo" viewBox="0 0 26 26"><rect width="26" height="26" rx="1" fill="#e02a2a"/><path d="M3 15L18 4 13 12h7L6 24l5-9z" fill="#fff"/></svg>
        <span class="title">通达信金融终端</span>
        ${menus.map((m, i) => html`<span class="menu">${m}${i === 5 ? html`<i class="dot"></i>` : ""}</span>`)}
        <span class="trade">交易未登录</span>
        <span class="stk">狮头股份</span>
        ${["功能", "版面", "公式", "选项", "帮助"].map((m) => html`<span class="rmenu">${m}</span>`)}
        <span class="clock">07:23:27<b>周五</b></span>
        <svg class="win" viewBox="0 0 156 30">
          <path d="M29 7l-6 8 6 8" fill="none" stroke="#333" stroke-width="2.6"/>
          <path d="M57 15h11" stroke="#333" stroke-width="3"/>
          <path d="M92 11h11v12H92zM96 11V7h11v12h-4" fill="none" stroke="#333" stroke-width="2.6"/>
          <path d="M130 7l11 16M141 7l-11 16" stroke="#333" stroke-width="2.6"/>
        </svg>
      </div>
      <div class="main">
        <div class="left">
          <div class="bar">
            <span class="tg">${this.toggle()}</span>
            ${periods.map((p) => html`<span class="per ${p === "日线" ? "on" : ""}">${p}</span>`)}
            <div class="tools">${tools.map((t) => html`<span class="tool">${t}</span>`)}</div>
          </div>
          <div class="info">
            <span>狮头股份(日线)</span>${this.knob()}<span>涨停到位</span>
            <span class="ind" style="color:#e8e8e8;margin-left:9px">攻击线: 6.81${this.dnA("#30e0f0")}</span>
            <span class="ind" style="color:#ffff00;margin-left:12px">黄金线: 6.72${this.upA("#f02020")}</span>
            <span class="ind" style="color:#ff00ff">生命线: 6.60${this.upA("#f02020")}</span>
            <span class="ind" style="color:#00e8e8">决策线: 6.57${this.upA("#f02020")}</span>
            <span class="ind" style="color:#e08800">牛熊线: 6.81${this.dnA("#30e0f0")}</span>
            <span class="spacer"></span>
            <span class="mini">
              <svg width="14" height="16" viewBox="0 0 14 16"><path d="M7 1l6 7-6 7-6-7z" fill="none" stroke="#777" stroke-width="1.4"/></svg>
              ${this.toggle()}
            </span>
            <span class="acts"></span>
          </div>
          ${this.priceChart()}
          <div class="vhead">
            <div class="vtext">
              ${this.knob()}<span>VOL-TDX(5,10)</span>
              <span class="ind" style="color:#e8e8e8;margin-left:10px">VVOL: 24485.10${this.upA("#f02020")}</span>
              <span class="ind" style="color:#ffff00;margin-left:20px">VOLUME: 24485.10${this.dnA("#30e0f0")}</span>
              <span class="ind" style="color:#ffff00;margin-left:11px">MA5:</span>
            </div>
            <span class="spacer"></span>
            <span class="acts"></span>
          </div>
          ${this.volChart()}
          ${this.dateAxis()}
          <div class="tabs one">
            ${tabs1.map((t) => html`<span class="tab ${t[2] ?? ""}" style="width:${t[1]}px">${t[0]}</span>`)}
            <div class="tabr"><span class="tab">模板</span></div>
          </div>
          <div class="tabs two">
            ${tabs2.map((t) => html`<span class="tab ${t[2] ?? ""}" style="width:${t[1]}px">${t[0]}</span>`)}
          </div>
        </div>
        <div class="panel">
          <div class="head"><b>狮头股份</b><span>600539</span></div>
          <div class="quote"><span>6.79</span><span>▲0.05</span><span>0.74%</span></div>
          <div class="sec plain">
            ${book.map((b) => html`<div class="row book"><span class="l">${b[0]}${b[3] ? html`<span class="yen">${b[3]}</span>` : ""}</span><span class="n r">${b[1]}</span>${this.val(b[2], "y")}</div>`)}
          </div>
          <div class="sec mid"><i></i><u></u></div>
          <div class="sec pad1">
            ${book2.map((b) => html`<div class="row book"><span class="l">${b[0]}</span><span class="n r">${b[1]}</span>${this.val(b[2], "y")}</div>`)}
          </div>
          <div class="sec pad1">
            ${stats.map((s) => html`<div class="row stat"><span class="l">${s[0]}</span>${this.val(s[1], s[2])}<span class="l l2">${s[3]}</span>${this.val(s[4], s[5])}</div>`)}
          </div>
          <div class="sec pad3">
            ${stats2.map((s) => html`<div class="row stat stat3"><span class="l">${s[0]}</span>${this.val(s[1], s[2])}<span class="l l2">${s[3]}</span>${this.val(s[4], s[5])}</div>`)}
          </div>
          <div class="sec pad4">
            ${flows.map((f) => html`<div class="row flow"><span class="l">${f[0]}</span><span><i class="fbar ${f[2]}" style="width:${f[1]}px"></i></span>${this.val(f[3] as string, f[2] as string)}<span class="n pct ${f[2]}">${f[4]}</span></div>`)}
          </div>
          ${ticks.map((t) => html`<div class="row tick"><span class="time">${t[0]}</span><span class="n r">${t[1]}</span>${this.val(t[2], "y")}<span class="bs ${t[3] === "B" ? "r" : "g"}">${t[3]}</span><span class="n s">${t[4]}</span></div>`)}
        </div>
        <div class="side">
          ${sideIcons.map((ic, i) => html`<span class="si ${i === 0 ? "lead" : ""}"><svg width="28" height="28" viewBox="0 0 28 28">${ic}</svg></span>`)}
          <span class="sep"></span>
          ${sideIcons2.map((ic) => html`<span class="si"><svg width="28" height="28" viewBox="0 0 28 28">${ic}</svg></span>`)}
          <span class="sep"></span>
          ${sideIcons3.map((ic) => html`<span class="si"><svg width="28" height="28" viewBox="0 0 28 28">${ic}</svg></span>`)}
          ${sideText.map((t) => html`<span class="si ${/^[0-9N]/.test(t) ? "" : "cj"} ${t === "日" ? "on" : ""}">${t}</span>`)}
        </div>
      </div>
      <div class="stat-bar">
        <i class="coin"></i>
        ${status.map((s) => html`<span class="st ${s[2]}" style="width:${s[1]}px">${s[0]}</span>`)}
      </div>
      <div class="wm">
        <span class="cn">公式指标网</span>
        <svg width="78" height="78" viewBox="0 0 78 78">
          <path d="M5 39a34 34 0 0 1 68 0" fill="none" stroke="#d8604c" stroke-width="9"/>
          <path d="M73 39a34 34 0 0 1-34 34" fill="none" stroke="#e8c848" stroke-width="9"/>
          <path d="M39 2a5 6 0 1 0 .1 0zM28 17h22v22h8v12H47v26H31V51H20V39h8z" fill="#e8c848"/>
          <path d="M33 25h12M33 32h12M24 45h30M36 54h6M34 62h10" stroke="#7ba9d8" stroke-width="2"/>
          <defs><path id="arc" d="M6 42a33 33 0 0 0 24 30"/></defs>
          <text font-size="7" fill="#14108c"><textPath href="#arc">www.9m8.cn</textPath></text>
        </svg>
        <span class="en">www.9m8.cn</span>
      </div>
      <div class="ime">
        <span class="a">A</span><span class="nm">极品五笔</span>
        <span class="b"><svg width="16" height="22" viewBox="0 0 16 22"><path d="M9 1c-1 7-3 11-8 14 5 5 12 3 13-3C15 8 12 4 9 1z" fill="#111"/></svg></span>
        <span class="b"><svg width="16" height="14" viewBox="0 0 16 14"><path d="M3 2h3v3L4 8M11 2h2v3l-1 2" fill="none" stroke="#111" stroke-width="1.8"/></svg></span>
        <span class="b"><svg width="24" height="22" viewBox="0 0 24 22"><rect x="1" y="3" width="22" height="16" fill="#c8c4bc" stroke="#888"/><path d="M3 7h18M3 11h18M3 15h18" stroke="#8a8a8a" stroke-width="2" stroke-dasharray="2 1"/></svg></span>
      </div>
    `;
  }
}
